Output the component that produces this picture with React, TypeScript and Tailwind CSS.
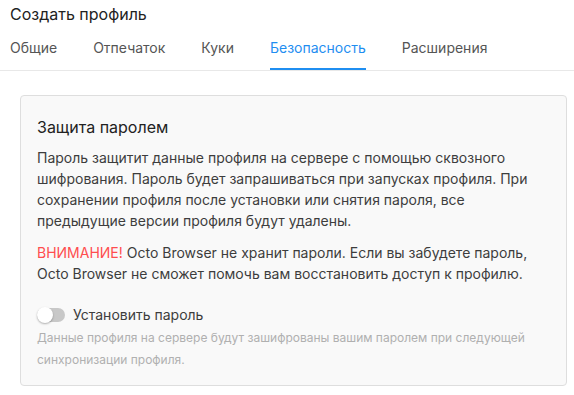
import React from "react";

export default function App() {
  const tabs = ["Общие", "Отпечаток", "Куки", "Безопасность", "Расширения"];
  const active = 3;
  return (
    <div
      className="w-[574px] h-[395px] bg-white overflow-hidden"
      style={{ fontFamily: "Inter, 'Noto Sans', sans-serif" }}
    >
      <div className="h-[28px] pl-[10px] text-[16px] leading-[28px] text-[#222]">
        Создать профиль
      </div>
      <div className="flex gap-[36px] pl-[10px] border-b border-[#e8e8e8]">
        {tabs.map((t, i) => (
          <div
            key={t}
            className={
              i === active
                ? "pt-[10px] pb-[10px] text-[14px] leading-[20px] text-[#1f8ef1] border-b-2 border-[#1f8ef1]"
                : "pt-[10px] pb-[10px] text-[14px] leading-[20px] text-[#555] border-b-2 border-transparent"
            }
          >
            {t}
          </div>
        ))}
      </div>
      <div className="mt-[24px] ml-[20px] mr-[7px] border border-[#dedede] rounded-[4px] bg-[#f9f9f9] pt-[19px] pb-[14px] px-[16px]">
        <div className="text-[16px] leading-[24px] text-[#222]">Защита паролем</div>
        <p className="mt-[8px] text-[14px] leading-[21px] text-[#3d3d3d]">
          Пароль защитит данные профиля на сервере с помощью сквозного шифрования. Пароль
          будет запрашиваться при запусках профиля. При сохранении профиля после установки
          или снятия пароля, все предыдущие версии профиля будут удалены.
        </p>
        <p className="mt-[11px] text-[14px] leading-[21px] text-[#3d3d3d]">
          <span className="text-[#ff4d4f]">ВНИМАНИЕ!</span> Octo Browser не хранит пароли.
          Если вы забудете пароль, Octo Browser не сможет помочь вам восстановить доступ к
          профилю.
        </p>
        <div className="mt-[21px] flex items-center h-[20px]">
          <div className="relative w-[28px] h-[14px] rounded-full bg-[#c8c8c8]">
            <div className="absolute left-0 top-[-1px] w-[16px] h-[16px] rounded-full bg-white shadow-[0_1px_2px_rgba(0,0,0,0.3)]" />
          </div>
          <span className="ml-[8px] text-[14px] leading-[20px] text-[#3d3d3d]">
            Установить пароль
          </span>
        </div>
        <p className="mt-[2px] text-[12px] leading-[22px] text-[#b0b0b0]">
          Данные профиля на сервере будут зашифрованы вашим паролем при следующей
          синхронизации профиля.
        </p>
      </div>
    </div>
  );
}
